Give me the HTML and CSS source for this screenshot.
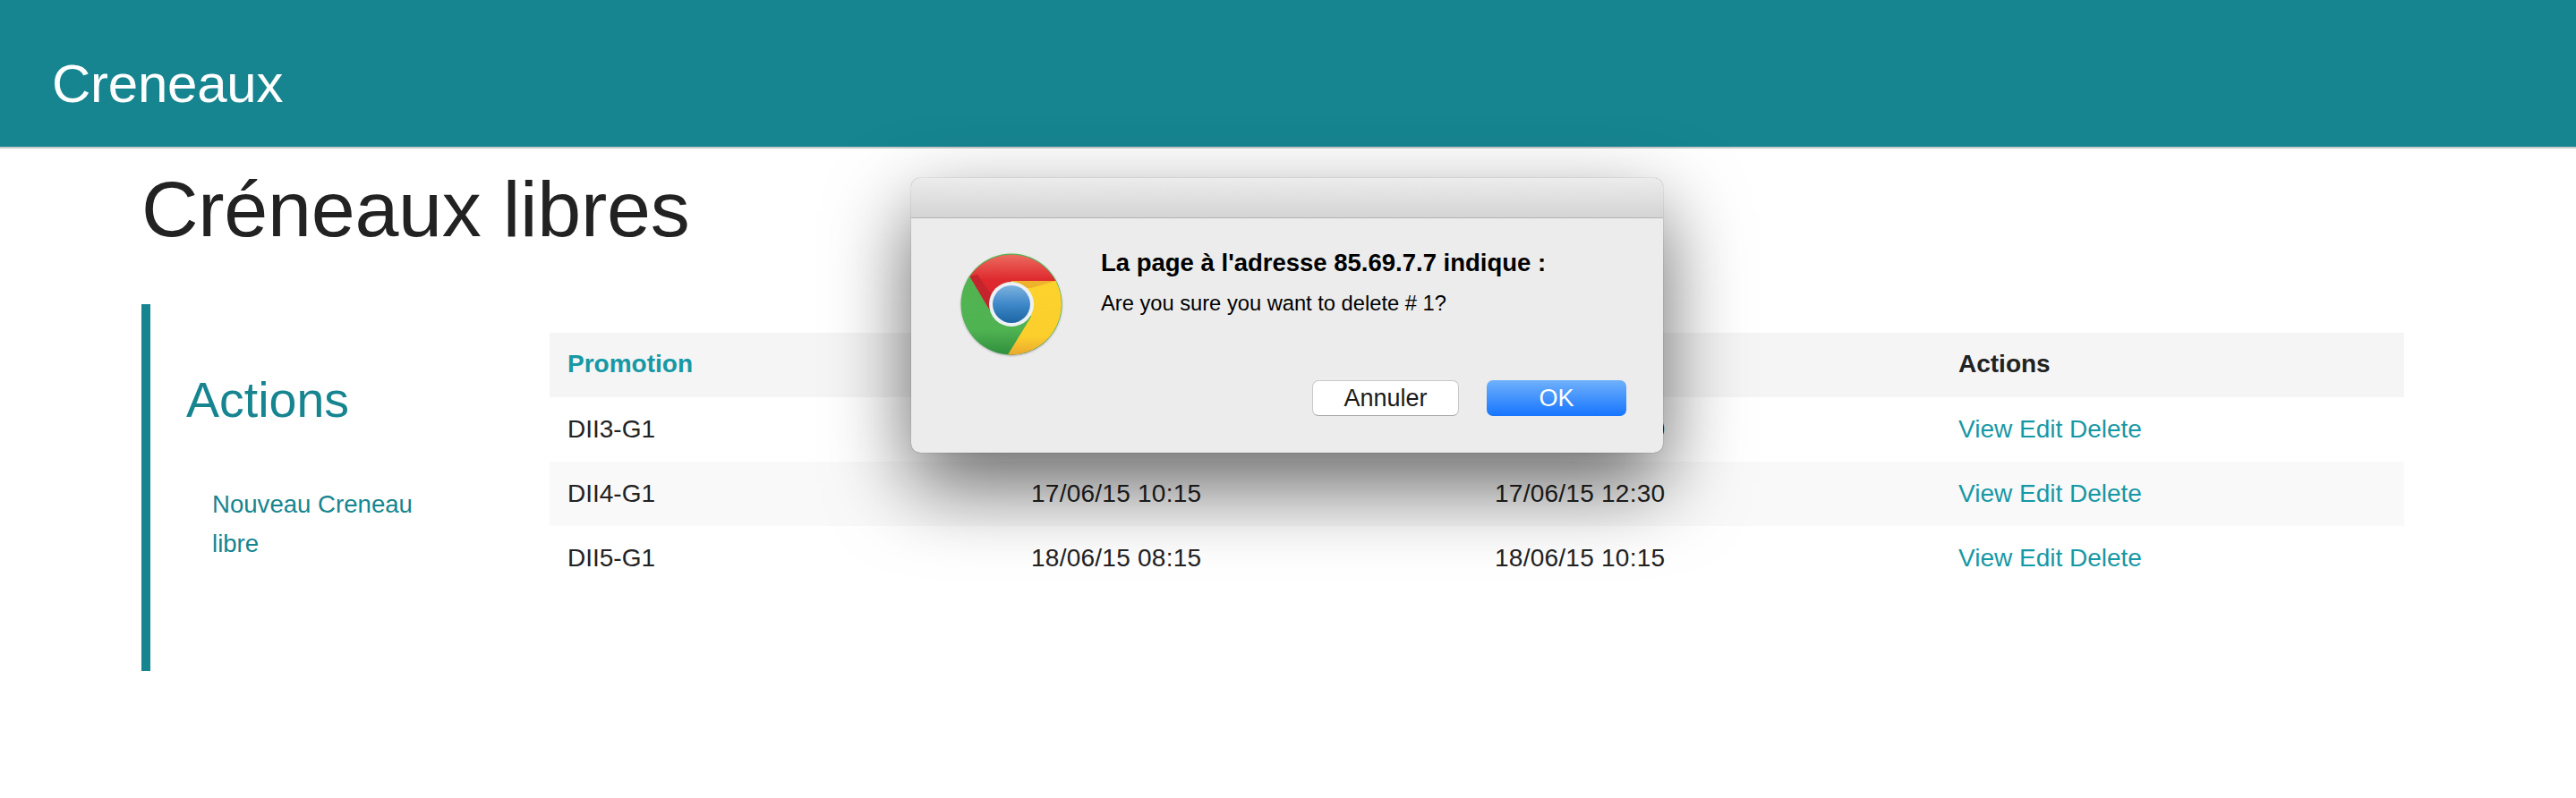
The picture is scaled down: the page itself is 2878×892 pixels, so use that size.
FILE: index.html
```html
<!DOCTYPE html>
<html lang="fr">
<head>
    <meta charset="UTF-8">
    <title>Creneaux</title>
    <link rel="stylesheet" href="styles.css">
</head>
<body>
    <header class="top-bar">
        <a class="top-bar-title" href="#">Creneaux</a>
    </header>

    <main class="content">
        <h1 class="page-title">Créneaux libres</h1>
        <div class="columns">
            <nav class="side-nav">
                <h3 class="side-nav-heading">Actions</h3>
                <a class="side-nav-link" href="#">Nouveau Creneau libre</a>
            </nav>
            <table class="slots">
                <thead>
                    <tr>
                        <th class="sorted">Promotion</th>
                        <th>Debut</th>
                        <th>Fin</th>
                        <th>Actions</th>
                    </tr>
                </thead>
                <tbody>
                    <tr>
                        <td>DII3-G1</td>
                        <td class="date">16/06/15 10:15</td>
                        <td class="date">16/06/15 12:30</td>
                        <td><a href="#">View</a> <a href="#">Edit</a> <a href="#">Delete</a></td>
                    </tr>
                    <tr>
                        <td>DII4-G1</td>
                        <td class="date">17/06/15 10:15</td>
                        <td class="date">17/06/15 12:30</td>
                        <td><a href="#">View</a> <a href="#">Edit</a> <a href="#">Delete</a></td>
                    </tr>
                    <tr>
                        <td>DII5-G1</td>
                        <td class="date">18/06/15 08:15</td>
                        <td class="date">18/06/15 10:15</td>
                        <td><a href="#">View</a> <a href="#">Edit</a> <a href="#">Delete</a></td>
                    </tr>
                </tbody>
            </table>
        </div>
    </main>

    <div class="dialog">
        <div class="dialog-titlebar"></div>
        <div class="dialog-body">
            <svg class="dialog-icon" viewBox="-57 -57 114 114" width="114" height="114">
                <defs>
                    <linearGradient id="red" x1="0" y1="0" x2="0" y2="1">
                        <stop offset="0" stop-color="#ec6a5f"/>
                        <stop offset="0.45" stop-color="#de2a2e"/>
                        <stop offset="1" stop-color="#dc1f27"/>
                    </linearGradient>
                    <linearGradient id="yellow" x1="0" y1="0" x2="0" y2="1">
                        <stop offset="0" stop-color="#fdd22d"/>
                        <stop offset="0.75" stop-color="#fccf2c"/>
                        <stop offset="1" stop-color="#eaa92f"/>
                    </linearGradient>
                    <linearGradient id="green" x1="0" y1="0" x2="0" y2="1">
                        <stop offset="0" stop-color="#52b44f"/>
                        <stop offset="0.75" stop-color="#50b352"/>
                        <stop offset="1" stop-color="#2f8f3c"/>
                    </linearGradient>
                    <linearGradient id="blue" x1="0" y1="0" x2="0" y2="1">
                        <stop offset="0" stop-color="#7db2de"/>
                        <stop offset="0.5" stop-color="#3f88c9"/>
                        <stop offset="1" stop-color="#1c66a4"/>
                    </linearGradient>
                </defs>
                <circle r="56.5" fill="url(#green)"/>
                <path d="M-4,56.4 L22,14 L28,14 L3,56.4 Z" fill="#3f9a45"/>
                <path d="M-46.5,-31 A56.5,56.5 0 0 1 49.5,-26 L0,-26 L-24,7 Z" fill="url(#red)"/>
                <path d="M-46.5,-31 L-24,7 L-22,-10 L-38,-33 Z" fill="#c4242b"/>
                <path d="M49.5,-26 A56.5,56.5 0 0 1 -4,56.4 L22,14 L0,-26 Z" fill="url(#yellow)"/>
                <path d="M0,-26 L49.5,-26 L22,-18 L12,-18 Z" fill="#eeb22c"/>
                <circle r="25" fill="#eef1f3"/>
                <circle r="21" fill="url(#blue)"/>
            </svg>
            <div class="dialog-text">
                <p class="dialog-title">La page à l'adresse 85.69.7.7 indique :</p>
                <p class="dialog-message">Are you sure you want to delete # 1?</p>
            </div>
        </div>
        <div class="dialog-buttons">
            <button class="btn btn-cancel">Annuler</button>
            <button class="btn btn-ok">OK</button>
        </div>
    </div>
</body>
</html>
```

FILE: styles.css
```css
body {
    margin: 0;
    font-family: "Liberation Sans", Arial, sans-serif;
    color: #222;
    background-color: #fff;
}
a {
    text-decoration: none;
}

.top-bar {
    height: 164px;
    padding: 64px 0 0 58px;
    box-sizing: border-box;
    background-color: #168590;
    box-shadow: 0 2px 0 #c9c9c9;
}
.top-bar-title {
    display: block;
    font-size: 60px;
    line-height: 60px;
    letter-spacing: -0.25px;
    color: #fff;
}

.content {
    padding: 2px 192px 0 158px;
}
.page-title {
    margin: 18px 0 56px;
    font-size: 88px;
    line-height: 100px;
    font-weight: normal;
    letter-spacing: -0.25px;
    color: #222;
}
.columns {
    display: flex;
}

.side-nav {
    flex: none;
    width: 456px;
    height: 410px;
    box-sizing: border-box;
    padding: 79px 120px 0 40px;
    border-left: 10px solid #168590;
}
.side-nav-heading {
    margin: 0 0 67px;
    font-size: 55.5px;
    line-height: 56px;
    font-weight: normal;
    color: #168590;
}
.side-nav-link {
    display: block;
    padding-left: 29px;
    font-size: 27.6px;
    line-height: 44px;
    color: #168590;
}

.slots {
    flex: none;
    width: 2072px;
    height: 288px;
    margin-top: 32px;
    table-layout: fixed;
    border-collapse: collapse;
    font-size: 28px;
}
.slots th,
.slots td {
    height: 72px;
    padding: 0 20px;
    text-align: left;
}
.slots th {
    padding-bottom: 2px;
    box-sizing: border-box;
}
.slots thead tr {
    background-color: #f5f5f5;
}
.slots tbody tr:nth-child(even) {
    background-color: #f9f9f9;
}
.slots th.sorted {
    color: #1798a5;
}
.slots a {
    color: #1798a5;
}
.slots .date {
    letter-spacing: 0.25px;
}

/* native alert box sitting over the page */
.dialog {
    position: absolute;
    left: 1018px;
    top: 199px;
    width: 840px;
    height: 307px;
    display: flex;
    flex-direction: column;
    box-sizing: border-box;
    background-color: #ececec;
    border-radius: 10px;
    color: #000;
    box-shadow: 0 0 1px rgba(0, 0, 0, 0.6), 0 36px 90px rgba(0, 0, 0, 0.6);
}
.dialog-titlebar {
    flex: none;
    height: 45px;
    box-sizing: border-box;
    border-radius: 10px 10px 0 0;
    border-bottom: 1px solid #b4b4b4;
    background: linear-gradient(#ececec, #d4d4d4);
}
.dialog-body {
    display: flex;
    padding: 35px 0 0 55px;
}
.dialog-icon {
    flex: none;
    margin: 4px 43px 0 0;
    filter: drop-shadow(0 1px 1px rgba(0, 0, 0, 0.25));
}
.dialog-title {
    margin: 0 0 17px;
    font-size: 27.5px;
    line-height: 30px;
    font-weight: bold;
}
.dialog-message {
    margin: 0;
    font-size: 23.7px;
    line-height: 26px;
}
.dialog-buttons {
    display: flex;
    justify-content: flex-end;
    gap: 31px;
    margin-top: auto;
    padding: 0 41px 41px 0;
}
.btn {
    height: 40px;
    padding: 0;
    font-family: inherit;
    font-size: 27px;
    border-radius: 7px;
}
.btn-cancel {
    width: 164px;
    color: #1a1a1a;
    background-color: #fff;
    border: 1px solid #c8c8c8;
    border-bottom-color: #a8a8a8;
}
.btn-ok {
    width: 156px;
    color: #fff;
    border: 0;
    background: linear-gradient(#6fb1fb, #1675fe);
}
```
